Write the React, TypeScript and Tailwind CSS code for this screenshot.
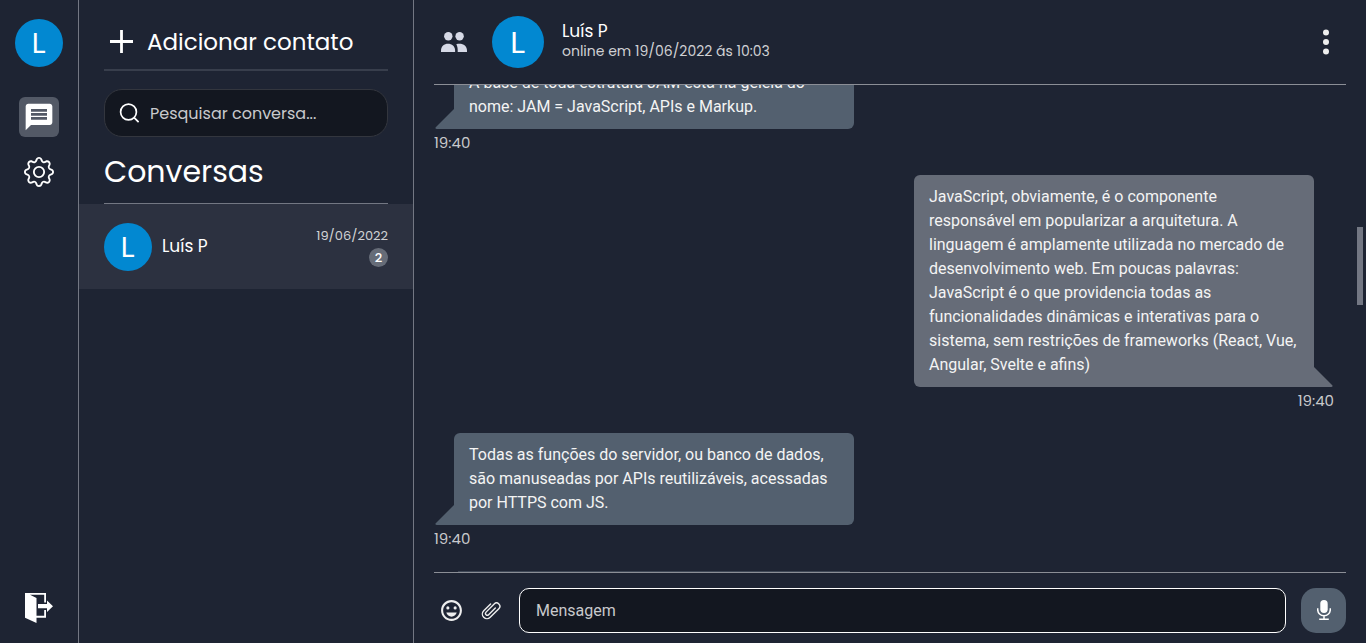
import { BsGear } from "react-icons/bs";
import { MdMessage, MdOutlineEmojiEmotions } from "react-icons/md";

const display = "font-[Poppins,Inter,'Open_Sans',sans-serif]";
const body = "font-[Roboto,'Liberation_Sans',sans-serif]";

function Avatar({ className }: { className: string }) {
  return (
    <span
      className={`flex shrink-0 items-center justify-center rounded-full bg-[#0288d1] pr-px pb-px font-[Lato,sans-serif] leading-none text-white ${className}`}
    >
      L
    </span>
  );
}

function PeopleIcon() {
  return (
    <svg width="26" height="20" viewBox="0 0 26 20" fill="#d6d9e6" aria-hidden="true">
      <circle cx="7.3" cy="4.2" r="4.2" />
      <circle cx="18.6" cy="4.2" r="4.2" />
      <path d="M0 20v-1.500C0 14.300 3.200 11.800 7 11.800s7.100 2.500 7.100 6.700V20z" />
      <path d="M15.300 12.200c1-.3 2-.4 3.100-.4 4.400 0 7.600 2.500 7.600 6.700V20h-9.300v-1.700c0-2.300-.3-4.200-1.400-6.100z" />
    </svg>
  );
}

function SearchIcon() {
  return (
    <svg width="20" height="20" viewBox="0 0 20 20" fill="none" stroke="white" strokeWidth="1.7" aria-hidden="true">
      <circle cx="9.5" cy="9" r="7.9" />
      <path d="M15.100 14.600l4.500 4.500" />
    </svg>
  );
}

function PlusIcon() {
  return (
    <svg width="23" height="23" viewBox="0 0 23 23" fill="none" stroke="white" strokeWidth="2.8" aria-hidden="true">
      <path d="M11.500 0v23M0 11.500h23" />
    </svg>
  );
}

function ExitIcon() {
  return (
    <svg width="28" height="30" viewBox="0 0 28 30" fill="white" aria-hidden="true">
      <path d="M0 0h21v9.500h-1.800V1.800H5L11.500 5v17.800h7.700V17H21v7.800h-9.500V30L0 24.800z" />
      <path d="M13 11h9V7.500l6 5.700-6 5.700v-3.600h-9z" />
    </svg>
  );
}

function ClipIcon() {
  return (
    <svg width="20" height="20" viewBox="-10 -10 20 20" fill="none" stroke="#eeeeee" strokeWidth="1.4" strokeLinecap="round" aria-hidden="true">
      <path transform="rotate(45)" d="M-4.600-4V5.700a4.600 4.600 0 0 0 9.200 0V-6.500a3.300 3.300 0 0 0-6.600 0V5a1.800 1.800 0 0 0 3.600 0V-4.500" />
    </svg>
  );
}

function MicIcon() {
  return (
    <svg width="14" height="20" viewBox="0 0 14 20" fill="none" aria-hidden="true">
      <rect x="3.300" y="0" width="7.400" height="13" rx="3.700" fill="white" />
      <path d="M.7 8.300v1.200a6.300 6.300 0 0 0 12.600 0V8.300M7 15.800v3M2.200 19.200h9.600" stroke="white" strokeWidth="1.500" />
    </svg>
  );
}

function DotsIcon() {
  return (
    <svg width="6" height="26" viewBox="0 0 6 26" fill="#eeeeee" aria-hidden="true">
      <circle cx="3" cy="3.500" r="3" />
      <circle cx="3" cy="13" r="3" />
      <circle cx="3" cy="22.500" r="3" />
    </svg>
  );
}

type Message = { text: string; time: string; mine: boolean };

const messages: Message[] = [
  {
    text: "A base de toda estrutura JAM está na geleia do nome: JAM = JavaScript, APIs e Markup.",
    time: "19:40",
    mine: false,
  },
  {
    text: "JavaScript, obviamente, é o componente responsável em popularizar a arquitetura. A linguagem é amplamente utilizada no mercado de desenvolvimento web. Em poucas palavras: JavaScript é o que providencia todas as funcionalidades dinâmicas e interativas para o sistema, sem restrições de frameworks (React, Vue, Angular, Svelte e afins)",
    time: "19:40",
    mine: true,
  },
  {
    text: "Todas as funções do servidor, ou banco de dados, são manuseadas por APIs reutilizáveis, acessadas por HTTPS com JS.",
    time: "19:40",
    mine: false,
  },
];

function Bubble({ text, time, mine }: Message) {
  return (
    <li className={`flex flex-col ${mine ? "items-end pr-3" : "items-start"}`}>
      <div
        className={`relative w-full max-w-[400px] rounded-md px-[15px] py-[10px] ${
          mine ? "mr-5 rounded-br-none bg-[#666c78]" : "ml-5 rounded-bl-none bg-[#53606f]"
        }`}
      >
        <p className={`${body} text-base leading-6 text-[#f4f4f4]`}>{text}</p>
        <svg
          className={`absolute bottom-0 ${mine ? "left-full" : "right-full"}`}
          width="19"
          height="20"
          viewBox="0 0 19 20"
          fill={mine ? "#666c78" : "#53606f"}
          aria-hidden="true"
        >
          <path d={mine ? "M0 0l18.500 18.500q.5 1.500-1.500 1.500H0z" : "M19 0L.5 18.500q-.5 1.500 1.500 1.500h17z"} />
        </svg>
      </div>
      <time className={`${display} pt-1 text-[15px] leading-5 text-[#c8c9cc]`}>{time}</time>
    </li>
  );
}

export default function App() {
  return (
    <div className={`${display} flex h-screen overflow-hidden bg-[#1e2433] text-white`}>
      <nav className="flex w-[79px] shrink-0 flex-col items-center border-r border-[#737783] pt-[19px] pb-5">
        <button aria-label="Perfil">
          <Avatar className="size-12 text-[27px]" />
        </button>
        <button
          aria-label="Conversas"
          className="mt-[30px] flex size-10 items-center justify-center rounded-md bg-[#535966]"
        >
          <MdMessage className="size-8" />
        </button>
        <button aria-label="Configurações" className="mt-5">
          <BsGear className="size-[30px]" />
        </button>
        <button aria-label="Sair" className="mt-auto">
          <ExitIcon />
        </button>
      </nav>

      <aside className="flex w-[335px] shrink-0 flex-col border-r border-[#737783]">
        <div className="flex flex-col px-[25px] pt-[14px]">
          <button className="flex h-[57px] items-center gap-[14px] border-b-2 border-[#383e4c] pl-[6px] text-[23px] leading-9">
            <PlusIcon />
            Adicionar contato
          </button>
          <label className="mt-[18px] flex h-12 items-center gap-[11px] rounded-[18px] border border-[#33363e] bg-[#131720] px-[14px]">
            <SearchIcon />
            <input
              type="search"
              aria-label="Pesquisar conversa"
              placeholder="Pesquisar conversa..."
              className="min-w-0 flex-1 bg-transparent pt-0.5 text-base text-white outline-none placeholder:text-[#c8c9cc]"
            />
          </label>
          <h1 className="h-[67px] border-b border-[#737783] pt-3 text-[30px] leading-[46px]">Conversas</h1>
        </div>
        <button className="flex h-[85px] items-center gap-[10px] bg-[#2c3140] px-[25px] text-left">
          <Avatar className="size-12 text-[27px]" />
          <span className="flex-1 text-[17px] text-white">Luís P</span>
          <span className="flex flex-col items-end gap-0.5">
            <span className="text-[13px] leading-5 text-[#d0d1d4]">19/06/2022</span>
            <span className="flex size-[19px] items-center justify-center rounded-full bg-[#666c78] text-[13px] font-medium leading-none">
              2
            </span>
          </span>
        </button>
      </aside>

      <main className="flex min-w-0 flex-1 flex-col px-5">
        <header className="flex h-[85px] shrink-0 items-center border-b border-[#8b8e96] pl-[7px]">
          <button aria-label="Contatos">
            <PeopleIcon />
          </button>
          <Avatar className="ml-[25px] size-[52px] text-[29px]" />
          <div className="ml-[18px] flex-1 pb-0.5">
            <h2 className="text-[17px] leading-5">Luís P</h2>
            <p className="text-[14px] leading-5 text-[#d0d1d4]">online em 19/06/2022 ás 10:03</p>
          </div>
          <button aria-label="Mais opções" className="mr-[17px]">
            <DotsIcon />
          </button>
        </header>

        <section aria-label="Mensagens" className="relative min-h-0 flex-1">
          <div className="flex h-full flex-col justify-end overflow-hidden">
            <ul className="flex shrink-0 flex-col gap-[22px]">
              {messages.map((m) => (
                <Bubble key={m.text} {...m} />
              ))}
            </ul>
            <div className="mt-[22px] ml-6 h-px w-full max-w-[392px] shrink-0 bg-[#3d4655]" />
          </div>
          <div className="absolute top-[142px] -right-[17px] h-[78px] w-[6px] bg-[#737783]" />
        </section>

        <footer className="flex h-[71px] shrink-0 items-center border-t border-[#8b8e96] pt-1 pl-[5px]">
          <button aria-label="Emoji">
            <MdOutlineEmojiEmotions className="size-[25px] text-[#eeeeee]" />
          </button>
          <button aria-label="Anexar" className="ml-[17px]">
            <ClipIcon />
          </button>
          <input
            type="text"
            aria-label="Mensagem"
            placeholder="Mensagem"
            className={`${body} ml-[18px] h-[45px] min-w-0 flex-1 rounded-[10px] border border-white bg-[#131720] px-4 text-base text-white outline-none placeholder:text-[#c8c9cc]`}
          />
          <button
            aria-label="Gravar áudio"
            className="ml-[15px] flex size-[45px] items-center justify-center rounded-[15px] bg-[#53606f]"
          >
            <MicIcon />
          </button>
        </footer>
      </main>
    </div>
  );
}
